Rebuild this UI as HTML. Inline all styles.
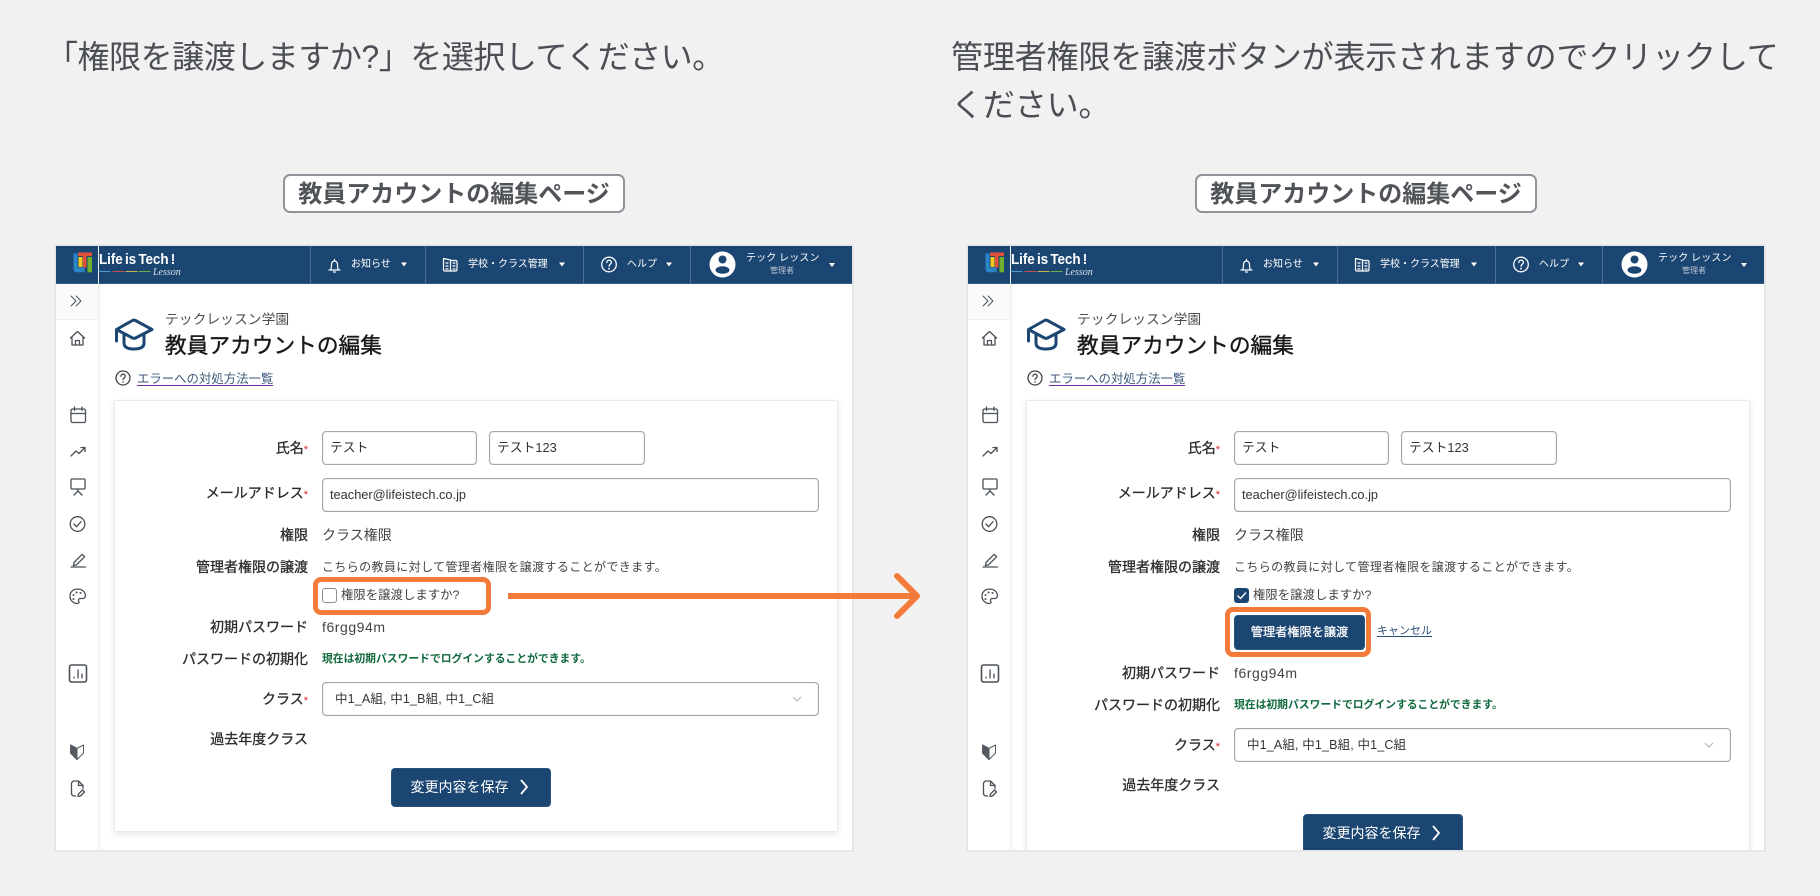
<!DOCTYPE html>
<html lang="ja"><head><meta charset="utf-8"><title>権限の譲渡</title>
<style>
*{box-sizing:border-box;margin:0;padding:0}
html,body{width:1820px;height:896px;overflow:hidden;background:#f1f1f1;font-family:"Liberation Sans","Noto Sans CJK JP",sans-serif;color:#222}
.abs,.h,.tag,.panel,.panel *{position:absolute}
.h{font-size:32px;line-height:48px;color:#4b4f55;white-space:nowrap}
.tag{top:174px;width:342px;height:39px;background:#fff;border:2px solid #8f949a;border-radius:7px;text-align:center;font-size:24px;line-height:38px;font-weight:700;color:#505459;white-space:nowrap}
.panel{left:56px;top:246px;width:796px;height:604px;background:#fff;overflow:hidden;box-shadow:0 0 0 2px #e7e7e7}
.hd{left:0;top:0;width:796px;height:38px;background:#1c4672;border-bottom:1px solid #2f5a86}
.sep{top:0;width:1px;height:38px;background:#4d7196}
.side{left:0;top:0;width:43px;height:604px;border-right:1px solid #eee;box-shadow:1px 0 3px rgba(0,0,0,.05)}
.st{left:0;top:38px;width:42px;height:35px;background:#fafafa}
.sl{left:0;top:73px;width:42px;height:1px;background:#eee}
.svg{left:0;top:0;width:796px;height:604px}
.nv{color:#fff;font-size:10px;line-height:14px;white-space:nowrap;top:12px}
.t{white-space:nowrap}
.logo{left:43px;top:4px;color:#fff;font-size:15px;font-weight:700;line-height:20px;word-spacing:-1.500px;letter-spacing:-.1px;white-space:nowrap;transform:scaleX(.9);transform-origin:0 0}
.les{left:97px;top:22px;color:#d7e0ea;font-size:10px;line-height:10px;font-style:italic;font-family:"Liberation Serif",serif;white-space:nowrap}
.card{left:58px;top:154px;width:724px;height:432px;background:#fff;border:1px solid #ececec;border-radius:2px;box-shadow:0 2px 6px rgba(0,0,0,.1)}
.lb{right:544px;width:200px;text-align:right;font-size:14px;line-height:20px;white-space:nowrap;color:#2b2b2b;-webkit-text-stroke:.3px #2b2b2b}
.panel .lb i{position:static;font-style:normal;color:#e0202a;font-size:11px;-webkit-text-stroke:0}
.in{background:#fff;border:1px solid #a3a7ac;border-radius:4px;height:34px;font-size:12.800px;line-height:32px;padding-left:7px;color:#333;white-space:nowrap;box-shadow:inset 0 0 1px #aaa}
.v{left:266px;font-size:14px;line-height:20px;color:#444;white-space:nowrap}
.btn{background:#1c4672;border-radius:4px;color:#fff;text-align:center;white-space:nowrap;border:1px solid #2a5480}
.org{border:5px solid #f47a3a;border-radius:8px}
.lk{left:81px;top:124px;font-size:12.400px;line-height:18px;color:#3c5a7a;text-decoration:underline;text-decoration-color:#7b2fa0;text-underline-offset:2px;white-space:nowrap}
</style></head><body>

<div class="h" style="left:46px;top:33px;letter-spacing:-.46px">「権限を譲渡しますか?」を選択してください。</div>
<div class="h" style="left:951px;top:33px;letter-spacing:-.13px">管理者権限を譲渡ボタンが表示されますのでクリックして<br>ください。</div>
<div class="tag" style="left:283px">教員アカウントの編集ページ</div>
<div class="tag" style="left:1195px">教員アカウントの編集ページ</div>

<svg width="0" height="0" style="position:absolute"><defs>
<g id="ic" fill="none" stroke-linecap="round" stroke-linejoin="round">
 <!-- logo -->
 <path d="M17.500 7.500h4v14h7v4.800h-8q-3 0-3-3z" fill="#2a86c8"/>
 <rect x="22" y="6.500" width="14" height="3.500" fill="#e2503a"/>
 <rect x="27" y="10" width="3.500" height="11.500" fill="#e2503a"/>
 <rect x="22.500" y="11" width="4" height="10" fill="#f4c91d"/>
 <rect x="31.500" y="11" width="4.500" height="15.300" fill="#6fae2d"/>
 <path d="M43 25.500h11" stroke="#4d9bd0"/><path d="M57 25.500h11" stroke="#c95050"/><path d="M70 25.500h11" stroke="#c8b850"/><path d="M83 25.500h11" stroke="#70ae50"/>
 <!-- bell -->
 <g stroke="#fff" stroke-width="1.200">
  <path d="M273 24h11M274.500 24c1-1.500 1-3 1-5.500 0-2 1.300-3.500 3-3.500s3 1.500 3 3.500c0 2.500 0 4 1 5.500"/><path d="M278.500 13.500v1.300M277.500 26h2"/>
  <!-- building -->
  <path d="M387.500 12.500l7 1.500v11h-5.500q-1.500 0-1.500-1.500zM394.500 14.500h5q1.500 0 1.500 1.500v7.500q0 1.500-1.500 1.500h-5" />
  <path d="M390 17h2M390 20h2M390 23h2M397 17h2M397 20h2M397 23h2"/>
  <circle cx="553" cy="18.500" r="7.300" stroke-width="1.300"/>
  <path d="M550.800 16.500c0-3 4.600-3 4.600 0 0 1.800-2.300 1.800-2.300 3.700" stroke-width="1.300"/>
 </g>
 <circle cx="553" cy="22.700" r=".9" fill="#fff"/>
 <path d="M345 16.500h6l-3 4zM503 16.500h6l-3 4zM610 16.500h6l-3 4zM773 17h6l-3 4z" fill="#fff"/>
 <!-- avatar -->
 <circle cx="666.500" cy="18.500" r="13" fill="#fff"/>
 <circle cx="666.500" cy="13.500" r="4" fill="#1c4672"/>
 <ellipse cx="666.500" cy="24" rx="7" ry="3.800" fill="#1c4672"/>
 <!-- sidebar -->
 <g stroke="#4a5058" stroke-width="1.300">
  <path d="M15 50l5 5-5 5M20 50l5 5-5 5" stroke-width="1"/>
  <path d="M14.500 92l7-6.500 7 6.500M16 91v8h11v-8M19.500 99v-4.500h4v4.500"/>
  <rect x="15" y="163" width="14.500" height="13.500" rx="1.500"/><path d="M15 167.500h14.500M18.500 161v3.500M26 161v3.500"/>
  <path d="M15 210l5-5 3 2.500 5.500-5.500M25 201.500h4v4"/>
  <rect x="15" y="233" width="14" height="10" rx="1"/><path d="M22 243v2M18 249l4-4 4 4"/>
  <circle cx="21.500" cy="278" r="7.300"/><path d="M18 278l2.500 2.700 4.500-5"/>
  <path d="M15 321h14.500M18 316.500l8.200-8.200 2.400 2.400-8.200 8.200-3 .7z"/>
  <path d="M21.500 343c-4.500 0-7.500 3.200-7.500 7.200s3.300 7.300 7.300 7.300c2 0 2-1.600 1.400-2.500-.8-1.400.2-2.500 1.600-2.500h2.500c1.500 0 2.600-1.200 2.600-3 0-3.700-3.500-6.500-7.900-6.500z"/>
  <rect x="13.500" y="419" width="17" height="17" rx="2" stroke-width="1.600"/><path d="M18 431v1M22 424v8M26 428v4"/>
  <path d="M15.500 547v-9q0-3 3-3h4l4.500 4.500v3M22.500 535v4.500h4.500M15.500 547q0 3 3 3h1M22 550.500l.5-2.500 4-4 2 2-4 4z"/>
 </g>
 <path d="M14.500 499l6.500 3.500 6.500-3.500v8l-6.500 6.500-6.500-6.500z" fill="#fff" stroke="#555b62" stroke-width="1"/>
 <path d="M14.500 499l6.500 3.500v11l-6.500-6.500z" fill="#555b62" stroke="#555b62" stroke-width="1"/>
 <g fill="#4a5058" stroke="none"><circle cx="17.500" cy="349" r="1"/><circle cx="20.500" cy="346.500" r="1"/><circle cx="24.500" cy="347" r="1"/><circle cx="17.500" cy="353" r="1"/></g>
 <!-- graduation -->
 <g stroke="#1c4672" stroke-width="3">
  <path d="M60.500 83.500l16-9q1.500-.7 3 0l16.500 9-16.500 8.500q-1.500.7-3 0z"/>
  <path d="M68 89v8q0 6 10 6t10-6v-8M60.500 84v11"/>
 </g>
 <!-- help -->
 <g stroke="#444" stroke-width="1.300"><circle cx="67" cy="132" r="7"/><path d="M65 130.300c0-2.800 4.200-2.800 4.200 0 0 1.700-2.100 1.700-2.100 3.300"/></g>
 <circle cx="67" cy="136" r=".8" fill="#444"/>
</g>
</defs></svg>

<!-- LEFT -->
<div class="panel" style="left:56px">
 <div class="hd"></div>
 <div class="sep" style="left:254px"></div><div class="sep" style="left:369px"></div><div class="sep" style="left:527px"></div><div class="sep" style="left:634px"></div>
 <div class="side"></div><div class="st"></div><div class="sl"></div>
 <div class="logo">Life is Tech !</div>
 <div class="les">Lesson</div>
 <div class="nv" style="left:295px">お知らせ</div>
 <div class="nv" style="left:412px">学校・クラス管理</div>
 <div class="nv" style="left:571px">ヘルプ</div>
 <div class="nv" style="left:690px;top:6px;letter-spacing:.1px">テック レッスン</div>
 <div class="nv" style="left:714px;top:20px;font-size:8px;line-height:10px;color:#b8c5d3">管理者</div>
 <div class="t" style="left:109px;top:64px;font-size:13.800px;line-height:20px;color:#4d4d4d">テックレッスン学園</div>
 <div class="t" style="left:109px;top:85px;font-size:21.700px;line-height:30px;color:#1a1a1a;-webkit-text-stroke:.4px #1a1a1a">教員アカウントの編集</div>
 <div class="lk">エラーへの対処方法一覧</div>
 <div class="card"></div>
 <div class="lb" style="top:192px">氏名<i>*</i></div>
 <div class="in" style="left:266px;top:185px;width:155px">テスト</div>
 <div class="in" style="left:433px;top:185px;width:156px">テスト123</div>
 <div class="lb" style="top:237px">メールアドレス<i>*</i></div>
 <div class="in" style="left:266px;top:232px;width:497px">teacher@lifeistech.co.jp</div>
 <div class="lb" style="top:279px">権限</div><div class="v" style="top:279px">クラス権限</div>
 <div class="lb" style="top:311px">管理者権限の譲渡</div>
 <div class="v" style="top:311px;font-size:12px;letter-spacing:.38px">こちらの教員に対して管理者権限を譲渡することができます。</div>
 <div style="left:266px;top:342px;width:15px;height:15px;border:1.200px solid #8a8e93;border-radius:3px"></div>
 <div class="v" style="left:285px;top:339px;font-size:12.400px">権限を譲渡しますか?</div>
 <div class="org" style="left:257px;top:331px;width:178px;height:38px"></div>
 <div class="lb" style="top:371px">初期パスワード</div><div class="v" style="top:371px;letter-spacing:.55px">f6rgg94m</div>
 <div class="lb" style="top:403px">パスワードの初期化</div>
 <div class="v" style="top:403px;font-size:10.800px;font-weight:700;color:#10693c">現在は初期パスワードでログインすることができます。</div>
 <div class="lb" style="top:443px">クラス<i>*</i></div>
 <div class="in" style="left:266px;top:436px;width:497px;padding-left:12px;font-size:12.500px;line-height:33px;letter-spacing:.15px">中1_A組, 中1_B組, 中1_C組</div>
 <div class="lb" style="top:483px">過去年度クラス</div>
 <div class="btn" style="left:335px;top:522px;width:160px;height:39px;font-size:14px;line-height:37px;padding-right:23px">変更内容を保存</div>
 <svg class="svg" viewBox="0 0 796 604"><use href="#ic"/>
  <path d="M737 451l4 4 4-4" fill="none" stroke="#b5b8bb" stroke-width="1.200"/>
  <path d="M465 534l6 7-6 7" fill="none" stroke="#fff" stroke-width="1.800"/>
 </svg>
</div>

<!-- RIGHT -->
<div class="panel" style="left:968px">
 <div class="hd"></div>
 <div class="sep" style="left:254px"></div><div class="sep" style="left:369px"></div><div class="sep" style="left:527px"></div><div class="sep" style="left:634px"></div>
 <div class="side"></div><div class="st"></div><div class="sl"></div>
 <div class="logo">Life is Tech !</div>
 <div class="les">Lesson</div>
 <div class="nv" style="left:295px">お知らせ</div>
 <div class="nv" style="left:412px">学校・クラス管理</div>
 <div class="nv" style="left:571px">ヘルプ</div>
 <div class="nv" style="left:690px;top:6px;letter-spacing:.1px">テック レッスン</div>
 <div class="nv" style="left:714px;top:20px;font-size:8px;line-height:10px;color:#b8c5d3">管理者</div>
 <div class="t" style="left:109px;top:64px;font-size:13.800px;line-height:20px;color:#4d4d4d">テックレッスン学園</div>
 <div class="t" style="left:109px;top:85px;font-size:21.700px;line-height:30px;color:#1a1a1a;-webkit-text-stroke:.4px #1a1a1a">教員アカウントの編集</div>
 <div class="lk">エラーへの対処方法一覧</div>
 <div class="card" style="height:470px"></div>
 <div class="lb" style="top:192px">氏名<i>*</i></div>
 <div class="in" style="left:266px;top:185px;width:155px">テスト</div>
 <div class="in" style="left:433px;top:185px;width:156px">テスト123</div>
 <div class="lb" style="top:237px">メールアドレス<i>*</i></div>
 <div class="in" style="left:266px;top:232px;width:497px">teacher@lifeistech.co.jp</div>
 <div class="lb" style="top:279px">権限</div><div class="v" style="top:279px">クラス権限</div>
 <div class="lb" style="top:311px">管理者権限の譲渡</div>
 <div class="v" style="top:311px;font-size:12px;letter-spacing:.38px">こちらの教員に対して管理者権限を譲渡することができます。</div>
 <div style="left:266px;top:342px;width:15px;height:15px;background:#1c4672;border-radius:3px"></div>
 <div class="v" style="left:285px;top:339px;font-size:12.400px">権限を譲渡しますか?</div>
 <div class="btn" style="left:266px;top:369px;width:131px;height:35px;font-size:12.200px;line-height:33px;-webkit-text-stroke:.25px #fff">管理者権限を譲渡</div>
 <div class="org" style="left:257px;top:361px;width:146px;height:50px"></div>
 <div class="t" style="left:409px;top:378px;font-size:11px;line-height:15px;color:#2a4d74;text-decoration:underline;text-underline-offset:2px">キャンセル</div>
 <div class="lb" style="top:417px">初期パスワード</div><div class="v" style="top:417px;letter-spacing:.55px">f6rgg94m</div>
 <div class="lb" style="top:449px">パスワードの初期化</div>
 <div class="v" style="top:449px;font-size:10.800px;font-weight:700;color:#10693c">現在は初期パスワードでログインすることができます。</div>
 <div class="lb" style="top:489px">クラス<i>*</i></div>
 <div class="in" style="left:266px;top:482px;width:497px;padding-left:12px;font-size:12.500px;line-height:33px;letter-spacing:.15px">中1_A組, 中1_B組, 中1_C組</div>
 <div class="lb" style="top:529px">過去年度クラス</div>
 <div class="btn" style="left:335px;top:568px;width:160px;height:39px;font-size:14px;line-height:37px;padding-right:23px">変更内容を保存</div>
 <svg class="svg" viewBox="0 0 796 604"><use href="#ic"/>
  <path d="M269.500 349.500l3 3 5.500-6" fill="none" stroke="#fff" stroke-width="1.300"/>
  <path d="M737 497l4 4 4-4" fill="none" stroke="#b5b8bb" stroke-width="1.200"/>
  <path d="M465 580l6 7-6 7" fill="none" stroke="#fff" stroke-width="1.800"/>
 </svg>
</div>

<!-- arrow -->
<svg class="abs" style="left:0;top:0" width="1820" height="896" viewBox="0 0 1820 896">
 <path d="M508 596H915" stroke="#f47a3a" stroke-width="6" fill="none"/>
 <path d="M897 576l20 20-20 20" stroke="#f47a3a" stroke-width="6" fill="none" stroke-linecap="round" stroke-linejoin="round"/>
</svg>
</body></html>
